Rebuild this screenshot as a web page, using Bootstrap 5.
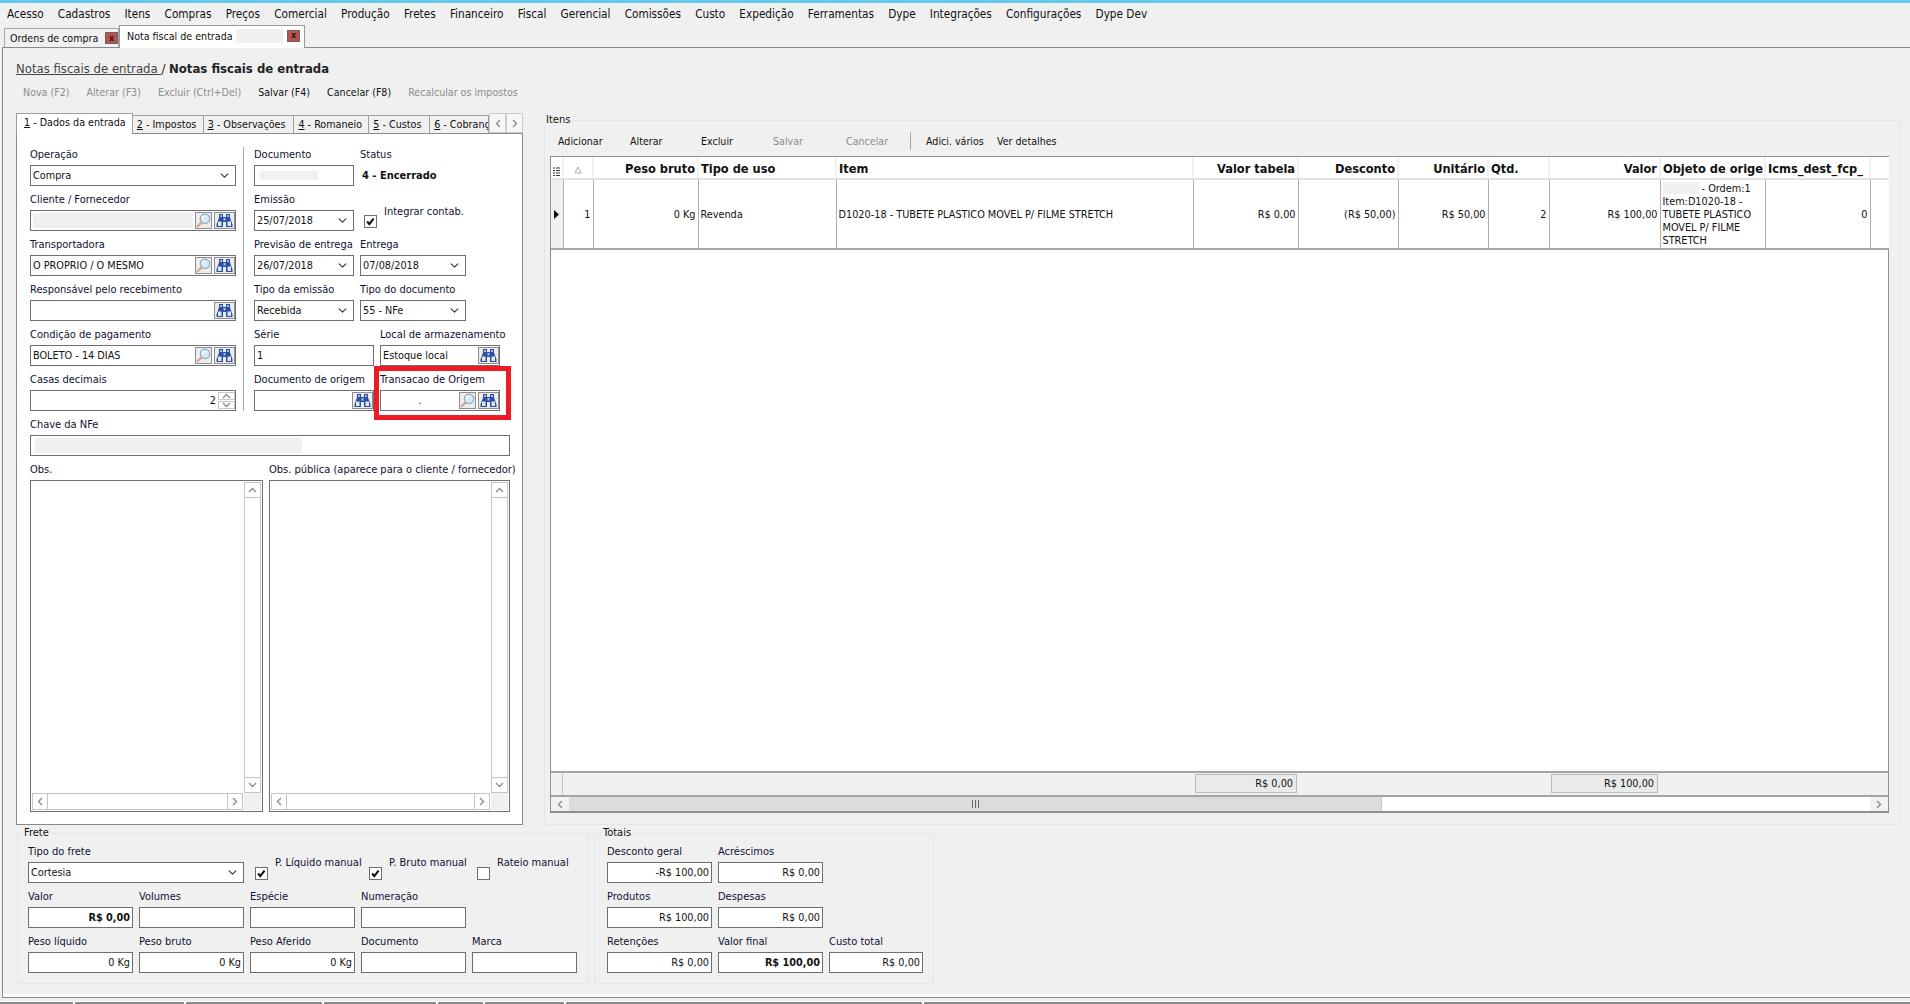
<!DOCTYPE html>
<html lang="pt-BR">
<head>
    <meta charset="UTF-8">
    <meta name="viewport" content="width=device-width, initial-scale=1.0">
    <title>Notas fiscais de entrada</title>
    <link href="https://cdn.jsdelivr.net/npm/bootstrap@5.3.0/dist/css/bootstrap.min.css" rel="stylesheet">
    <style>
        html, body { height: 100%; overflow: hidden; }
        body {
            background: #f0f0f0;
            color: #101030;
            font-family: "DejaVu Sans Condensed", "DejaVu Sans", sans-serif;
            font-stretch: condensed;
            font-size: 11px;
            line-height: 14px;
        }
        .top-strip { height: 3px; background: #64cbee; }
        .menu-bar { height: 22px; padding-left: 7px; gap: 14.2px; align-items: center; color: #111; white-space: nowrap; font-size: 11.7px; }

        /* document tabs */
        .doc-tabs { height: 22px; padding-left: 4px; border: 0; flex-wrap: nowrap; position: relative; z-index: 2; white-space: nowrap; font-size: 10.6px; }
        .doc-tab { display: flex; align-items: center; height: 19px; margin-top: 3px; border: 1px solid #a5a5a5; border-bottom: 0; background: #f0f0f0; padding-left: 5px; color: #111; }
        .doc-tab.on { background: #fff; height: 23px; margin-top: 0; padding: 0 0 3px 7px; border-color: #999; }
        .tab-x { display: flex; align-items: center; justify-content: center; width: 13px; height: 12px; background: #c0504d; border: 1px solid #666; font-size: 9px; line-height: 9px; font-weight: 700; color: #222; flex: none; }
        .blank-grey { background: #f0f0f0; }

        .work-frame { height: 951px; margin-left: 2px; border: 1px solid #8a8a8a; border-right: 0; background: #f0f0f0; padding-left: 13px; box-shadow: inset 0 -3px 0 #fff; }
        .crumb { height: 34px; padding-top: 13px; font-size: 13px; line-height: 16px; color: #222; }
        .crumb a { color: #444; }
        .tool-row { height: 31px; padding-top: 3px; gap: 17px; padding-left: 7px; color: #111; white-space: nowrap; font-size: 10.6px; }
        .off { color: #8c8c8c; }
        .itens-tools span { display: block; }
        .mid-row { height: 712px; }

        /* left tab panel */
        .left-side { width: 507px; flex: none; }
        .panel-tabs { height: 20px; border: 0; flex-wrap: nowrap; position: relative; z-index: 1; font-size: 10.7px; }
        .panel-tab { height: 18px; margin-top: 2px; border: 1px solid #a0a0a0; border-left: 0; border-bottom: 0; background: #f0f0f0; display: flex; align-items: center; padding-left: 4px; color: #111; white-space: nowrap; overflow: hidden; }
        .panel-tab.on { height: 21px; margin-top: 0; background: #fff; border-left: 1px solid #9a9a9a; padding: 0 0 2px 7px; }
        .tab-arrow { width: 17px; height: 20px; background: #f7f7f7; border: 1px solid #ccc; display: flex; align-items: center; justify-content: center; color: #666; }
        .tab-panel { height: 692px; background: #fff; border: 1px solid #8a8a8a; padding: 8px 0 0 13px; }
        .fld { height: 45px; }
        .fld label, .memo-cap { display: block; height: 23px; line-height: 25px; margin: 0; white-space: nowrap; }
        .w-100px { width: 100px; }
        .w-106px { width: 106px; }
        .w-120px { width: 120px; }
        .w-206px { width: 206px; }
        .gap-6 { gap: 6px; }
        .v-sep { width: 1px; height: 264px; margin: 5px 10px 0 7px; background: #a9a9a9; flex: none; }

        .form-control.win-in, .form-select.win-in {
            height: 21px;
            min-height: 21px;
            border: 1px solid #6e6e6e;
            border-radius: 0;
            padding: 0 2px;
            font-size: 10.8px;
            line-height: 19px;
            color: #111;
            background-color: #fff;
            box-shadow: none;
        }
        .form-select.win-in { background-position: right 5px center; background-size: 11px 9px; }
        .form-control.win-in.num { text-align: right; }
        .form-control.win-in.strong { font-weight: 700; }
        .look-box { height: 21px; border: 1px solid #6e6e6e; background: #fff; padding: 1px 0 1px 1px; align-items: center; gap: 2px; color: #111; overflow: hidden; font-size: 10.8px; }
        .look-text { flex: 1 1 auto; padding-left: 1px; white-space: nowrap; overflow: hidden; }
        .pick-btn { width: 17px; height: 17px; flex: none; padding: 0; border: 1px solid #8d8d8d; border-radius: 0; background: #ececec; display: flex; align-items: center; justify-content: center; }
        .pick-btn.wide { width: 21px; }
        .pick-btn svg { display: block; }
        .grey-fill { height: 15px; background: #f0f0f0; }
        .spin { width: 17px; flex: none; display: flex; flex-direction: column; gap: 1px; }
        .spin span { height: 8px; border: 1px solid #c8c8c8; display: flex; align-items: center; justify-content: center; }
        .status-text { font-weight: 700; padding: 3px 0 0 2px; line-height: 16px; color: #111; white-space: nowrap; }

        .win-check.form-check-input { width: 13px; height: 13px; margin: 0; border: 1px solid #6e6e6e; border-radius: 0; flex: none; box-shadow: none; }
        input.win-check.form-check-input:checked[type=checkbox] {
            background-color: #fff;
            border-color: #6e6e6e;
            --bs-form-check-bg-image: url("data:image/svg+xml,%3csvg xmlns='http://www.w3.org/2000/svg' viewBox='0 0 13 13'%3e%3cpath fill='none' stroke='%23111' stroke-width='2.4' d='M2.5 6.5l2.6 3 5-6.5'/%3e%3c/svg%3e");
        }
        .contab { padding-top: 24px; }
        .contab span { margin: -6px 0 0 7px; white-space: nowrap; }
        .contab input { margin-top: 4px !important; margin-left: 4px !important; }

        .red-box { position: absolute; left: -6px; top: -1px; width: 137px; height: 54px; border: 5px solid #ed1c24; pointer-events: none; }

        .memo { height: 332px; border: 1px solid #6e6e6e; padding: 1px; display: grid; background: #fff; }
        .memo-a { width: 233px; grid-template-columns: 1fr 17px; grid-template-rows: 1fr 17px; }
        .memo-b { width: 241px; grid-template-columns: 1fr 17px; grid-template-rows: 1fr 17px; }
        .sb-v { grid-column: 2; grid-row: 1; border: 1px solid #c4c4c4; display: flex; flex-direction: column; justify-content: space-between; }
        .sb-h { grid-column: 1; grid-row: 2; border: 1px solid #c4c4c4; display: flex; justify-content: space-between; margin-right: 1px; }
        .sb-corner { grid-column: 2; grid-row: 2; background: #f0f0f0; }
        .sb-btn { width: 15px; height: 15px; display: flex; align-items: center; justify-content: center; flex: none; }
        .sb-v .sb-btn:first-child { border-bottom: 1px solid #c4c4c4; }
        .sb-v .sb-btn:last-child { border-top: 1px solid #c4c4c4; }
        .sb-h .sb-btn:first-child { border-right: 1px solid #c4c4c4; }
        .sb-h .sb-btn:last-child { border-left: 1px solid #c4c4c4; }

        /* itens grid */
        .group-box { border: 1px solid #dfe6ec; border-radius: 3px; margin: 0; padding: 0; }
        .group-box legend { float: none; width: auto; font-size: 11px; line-height: 12px; margin: 0 0 0 -6px; padding: 0 2px; color: #111; }
        .itens-box { width: 1356px; height: 711px; margin: 1px 0 0 21px; flex: none; padding: 0 10px 0 5px; }
        .itens-tools { height: 30px; padding-top: 8px; padding-left: 8px; white-space: nowrap; color: #111; font-size: 10.6px; }
        .tool-sep { width: 1px; height: 18px; margin: -2px 15px 0 0; background: #aaa; }
        .grid-wrap { height: 657px; width: 1339px; border: 1px solid #8f8f8f; border-bottom: 0; background: #fff; display: flex; flex-direction: column; }
        .items-table { table-layout: fixed; width: 1338px; margin: 0; border-collapse: collapse; color: #111; }
        .items-table > thead > tr > th {
            height: 22px; padding: 0 2px 2px; font-size: 12.7px; line-height: 14px; font-weight: 700; color: #111; white-space: nowrap; overflow: hidden;
            background: #fff; border: 0; border-right: 2px solid #f0f0f0; border-bottom: 2px solid #e2e2e2; box-shadow: none;
        }
        .items-table > tbody > tr > td {
            height: 70px; padding: 0 2px; font-size: 10.8px; line-height: 13px; vertical-align: middle; color: #111; background: #fff; box-shadow: none;
            border: 0; border-right: 1px solid #b0b0b0; border-bottom: 2px solid #a8a8a8;
        }
        .items-table td.row-mark { background: #f0f0f0; padding: 0 0 0 3px; }
        .items-table .end-col { border-right: 0 !important; }
        .grid-fill { flex: 1 1 auto; }
        .sum-row { height: 24px; border-top: 2px solid #a4a4a4; background: #f0f0f0; position: relative; display: flex; flex: none; }
        .sum-lead { width: 12px; border-right: 1px solid #c6c6c6; }
        .sum-cell { height: 19px; margin-top: 1px; border: 1px solid #bcbcbc; background: #e8eaeb; text-align: right; padding: 2px 3px 0 0; font-size: 10.8px; line-height: 14px; color: #111; flex: none; }
        .h-scroll { height: 18px; display: flex; border-top: 2px solid #a4a4a4; border-bottom: 2px solid #8f8f8f; background: #fff; flex: none; }
        .h-scroll .end-btn { width: 18px; display: flex; align-items: center; justify-content: center; background: #f2f2f2; flex: none; }
        .h-scroll .thumb { width: 813px; background: #dcdcdc; display: flex; align-items: center; justify-content: center; border-right: 1px solid #c4c4c4; flex: none; }
        .grip { width: 7px; height: 8px; border-left: 1px solid #666; border-right: 1px solid #666; position: relative; }
        .grip::after { content: ""; position: absolute; left: 2px; top: 0; bottom: 0; width: 1px; background: #666; }

        /* bottom */
        .bottom-row { height: 158px; padding-top: 2px; }
        .frete-box { width: 572px; height: 157px; margin: 0 0 0 1px; flex: none; padding: 0 0 0 10px; }
        .totais-box { width: 340px; height: 157px; margin: 0 0 0 5px; flex: none; padding: 0 0 0 12px; }
        .w-105px { width: 105px; }
        .w-216px { width: 216px; }
        .chk-item { display: flex; align-items: flex-start; white-space: nowrap; }
        .chk-item input { margin-top: 28px !important; }
        .chk-item span { margin: 17px 0 0 7px; }
        .chk-first { width: 114px; margin-left: 11px; }
        .chk-second { width: 108px; }

        .task-strip { height: 6px; padding-top: 1px; display: flex; gap: 2px; background: linear-gradient(#f0f0f0 0, #f0f0f0 3px, #fff 3px); }
        .task-strip span { height: 2px; margin-top: 3px; background: #8a8a8a; }
    </style>
</head>
<body>
    <svg width="0" height="0" class="position-absolute">
        <symbol id="ico-lens" viewBox="0 0 16 16">
            <path d="M6 10l-4.2 4.2" stroke="#d4a68e" stroke-width="2.4" stroke-linecap="round"/>
            <circle cx="9.600" cy="6.200" r="5" fill="#d3eaf8" stroke="#93a8b2" stroke-width="1.300"/>
            <path d="M6.800 6.200a2.800 2.800 0 0 1 2.800-2.800" stroke="#fff" stroke-width="1.200" fill="none"/>
        </symbol>
        <symbol id="ico-bino" viewBox="0 0 17 15">
            <path d="M3 1h4v3h3V1h4v3.500l2.500 7V14h-6.500V9H7v5H.5v-2.500L3 4.500z" fill="#2d4d9e"/>
            <rect x="4" y="2" width="2" height="2" fill="#a4c0ea"/>
            <rect x="11" y="2" width="2" height="2" fill="#a4c0ea"/>
            <rect x="2" y="8.500" width="3.500" height="4.500" fill="#dbe8f8"/>
            <rect x="11.500" y="8.500" width="3.500" height="4.500" fill="#dbe8f8"/>
            <rect x="7.500" y="5" width="2" height="2.500" fill="#a8c2e8"/>
        </symbol>
        <symbol id="chev-up" viewBox="0 0 9 6"><path d="M1 5l3.500-3.500L8 5" fill="none" stroke="#8a8a8a" stroke-width="1.300"/></symbol>
        <symbol id="chev-down" viewBox="0 0 9 6"><path d="M1 1l3.500 3.500L8 1" fill="none" stroke="#8a8a8a" stroke-width="1.300"/></symbol>
        <symbol id="chev-left" viewBox="0 0 6 9"><path d="M5 1L1.500 4.500 5 8" fill="none" stroke="#8a8a8a" stroke-width="1.300"/></symbol>
        <symbol id="chev-right" viewBox="0 0 6 9"><path d="M1 1l3.500 3.500L1 8" fill="none" stroke="#8a8a8a" stroke-width="1.300"/></symbol>
    </svg>

    <div class="top-strip"></div>
    <nav class="menu-bar d-flex">
        <span>Acesso</span><span>Cadastros</span><span>Itens</span><span>Compras</span><span>Preços</span><span>Comercial</span><span>Produção</span><span>Fretes</span><span>Financeiro</span><span>Fiscal</span><span>Gerencial</span><span>Comissões</span><span>Custo</span><span>Expedição</span><span>Ferramentas</span><span>Dype</span><span>Integrações</span><span>Configurações</span><span>Dype Dev</span>
    </nav>

    <ul class="nav doc-tabs">
        <li class="doc-tab" style="width:115px">Ordens de compra<span class="tab-x ms-auto">x</span></li>
        <li class="doc-tab on" style="width:186px">Nota fiscal de entrada<span class="blank-grey ms-auto" style="width:47px;height:14px"></span><span class="tab-x ms-1 me-1">x</span></li>
    </ul>

    <main class="work-frame">
        <div class="crumb"><a href="#">Notas fiscais de entrada </a> / <b>Notas fiscais de entrada</b></div>
        <div class="tool-row d-flex">
            <span class="off">Nova (F2)</span><span class="off">Alterar (F3)</span><span class="off">Excluir (Ctrl+Del)</span><span>Salvar (F4)</span><span>Cancelar (F8)</span><span class="off">Recalcular os impostos</span>
        </div>

        <div class="mid-row d-flex">
            <section class="left-side">
                <ul class="nav panel-tabs">
                    <li class="panel-tab on" style="width:117px"><span><u>1</u> - Dados da entrada</span></li>
                    <li class="panel-tab" style="width:71px"><span><u>2</u> - Impostos</span></li>
                    <li class="panel-tab" style="width:91px"><span><u>3</u> - Observações</span></li>
                    <li class="panel-tab" style="width:75px"><span><u>4</u> - Romaneio</span></li>
                    <li class="panel-tab" style="width:61px"><span><u>5</u> - Custos</span></li>
                    <li class="panel-tab" style="width:59px"><span><u>6</u> - Cobrança</span></li>
                    <li class="tab-arrow"><svg width="6" height="9"><use href="#chev-left"/></svg></li>
                    <li class="tab-arrow ms-auto"><svg width="6" height="9"><use href="#chev-right"/></svg></li>
                </ul>
                <div class="tab-panel">
                    <div class="d-flex">
                        <div class="w-206px">
                            <div class="fld"><label>Operação</label>
                                <select class="form-select win-in"><option>Compra</option></select></div>
                            <div class="fld"><label>Cliente / Fornecedor</label>
                                <div class="look-box d-flex"><div class="look-text"><div class="grey-fill"></div></div>
                                    <button class="btn pick-btn"><svg width="15" height="15"><use href="#ico-lens"/></svg></button>
                                    <button class="btn pick-btn wide"><svg width="17" height="15"><use href="#ico-bino"/></svg></button></div></div>
                            <div class="fld"><label>Transportadora</label>
                                <div class="look-box d-flex"><div class="look-text">O PROPRIO / O MESMO</div>
                                    <button class="btn pick-btn"><svg width="15" height="15"><use href="#ico-lens"/></svg></button>
                                    <button class="btn pick-btn wide"><svg width="17" height="15"><use href="#ico-bino"/></svg></button></div></div>
                            <div class="fld"><label>Responsável pelo recebimento</label>
                                <div class="look-box d-flex"><div class="look-text"></div>
                                    <button class="btn pick-btn wide"><svg width="17" height="15"><use href="#ico-bino"/></svg></button></div></div>
                            <div class="fld"><label>Condição de pagamento</label>
                                <div class="look-box d-flex"><div class="look-text">BOLETO - 14 DIAS</div>
                                    <button class="btn pick-btn"><svg width="15" height="15"><use href="#ico-lens"/></svg></button>
                                    <button class="btn pick-btn wide"><svg width="17" height="15"><use href="#ico-bino"/></svg></button></div></div>
                            <div class="fld"><label>Casas decimais</label>
                                <div class="look-box d-flex"><div class="look-text text-end">2</div>
                                    <div class="spin"><span><svg width="9" height="6"><use href="#chev-up"/></svg></span><span><svg width="9" height="6"><use href="#chev-down"/></svg></span></div></div></div>
                        </div>
                        <div class="v-sep"></div>
                        <div>
                            <div class="d-flex gap-6">
                                <div class="fld w-100px"><label>Documento</label>
                                    <div class="look-box d-flex"><div class="blank-grey ms-1" style="width:58px;height:9px"></div></div></div>
                                <div class="fld"><label>Status</label><div class="status-text">4 - Encerrado</div></div>
                            </div>
                            <div class="d-flex gap-6">
                                <div class="fld w-100px"><label>Emissão</label>
                                    <select class="form-select win-in"><option>25/07/2018</option></select></div>
                                <div class="d-flex contab"><input class="form-check-input win-check" type="checkbox" checked><span>Integrar contab.</span></div>
                            </div>
                            <div class="d-flex gap-6">
                                <div class="fld w-100px"><label>Previsão de entrega</label>
                                    <select class="form-select win-in"><option>26/07/2018</option></select></div>
                                <div class="fld w-106px"><label>Entrega</label>
                                    <select class="form-select win-in"><option>07/08/2018</option></select></div>
                            </div>
                            <div class="d-flex gap-6">
                                <div class="fld w-100px"><label>Tipo da emissão</label>
                                    <select class="form-select win-in"><option>Recebida</option></select></div>
                                <div class="fld w-106px"><label>Tipo do documento</label>
                                    <select class="form-select win-in"><option>55 - NFe</option></select></div>
                            </div>
                            <div class="d-flex gap-6">
                                <div class="fld w-120px"><label>Série</label>
                                    <input class="form-control win-in" value="1"></div>
                                <div class="fld w-120px"><label>Local de armazenamento</label>
                                    <div class="look-box d-flex"><div class="look-text">Estoque local</div>
                                        <button class="btn pick-btn wide"><svg width="17" height="15"><use href="#ico-bino"/></svg></button></div></div>
                            </div>
                            <div class="d-flex gap-6">
                                <div class="fld w-120px"><label>Documento de origem</label>
                                    <div class="look-box d-flex"><div class="look-text"></div>
                                        <button class="btn pick-btn wide"><svg width="17" height="15"><use href="#ico-bino"/></svg></button></div></div>
                                <div class="fld w-120px position-relative"><label>Transacao de Origem</label>
                                    <div class="look-box d-flex"><div class="look-text text-center">.</div>
                                        <button class="btn pick-btn"><svg width="15" height="15"><use href="#ico-lens"/></svg></button>
                                        <button class="btn pick-btn wide"><svg width="17" height="15"><use href="#ico-bino"/></svg></button></div>
                                    <div class="red-box"></div></div>
                            </div>
                        </div>
                    </div>
                    <div class="fld" style="width:480px"><label>Chave da NFe</label>
                        <div class="look-box d-flex px-1"><div class="grey-fill" style="width:267px"></div></div></div>
                    <div class="d-flex gap-6">
                        <div><div class="memo-cap">Obs.</div>
                            <div class="memo memo-a">
                                <div class="sb-v"><div class="sb-btn"><svg width="9" height="6"><use href="#chev-up"/></svg></div><div class="sb-btn"><svg width="9" height="6"><use href="#chev-down"/></svg></div></div>
                                <div class="sb-h"><div class="sb-btn"><svg width="6" height="9"><use href="#chev-left"/></svg></div><div class="sb-btn"><svg width="6" height="9"><use href="#chev-right"/></svg></div></div>
                                <div class="sb-corner"></div>
                            </div></div>
                        <div><div class="memo-cap">Obs. pública (aparece para o cliente / fornecedor)</div>
                            <div class="memo memo-b">
                                <div class="sb-v"><div class="sb-btn"><svg width="9" height="6"><use href="#chev-up"/></svg></div><div class="sb-btn"><svg width="9" height="6"><use href="#chev-down"/></svg></div></div>
                                <div class="sb-h"><div class="sb-btn"><svg width="6" height="9"><use href="#chev-left"/></svg></div><div class="sb-btn"><svg width="6" height="9"><use href="#chev-right"/></svg></div></div>
                                <div class="sb-corner"></div>
                            </div></div>
                    </div>
                </div>
            </section>

            <fieldset class="group-box itens-box">
                <legend>Itens</legend>
                <div class="itens-tools d-flex">
                    <span style="width:72px">Adicionar</span><span style="width:71px">Alterar</span><span style="width:72px">Excluir</span><span class="off" style="width:73px">Salvar</span><span class="off" style="width:64px">Cancelar</span>
                    <span class="tool-sep"></span>
                    <span style="width:71px">Adici. vários</span><span>Ver detalhes</span>
                </div>
                <div class="grid-wrap">
                    <table class="table items-table">
                        <colgroup>
                            <col style="width:12px"><col style="width:30px"><col style="width:105px"><col style="width:138px"><col style="width:357px"><col style="width:105px"><col style="width:100px"><col style="width:90px"><col style="width:61px"><col style="width:111px"><col style="width:105px"><col style="width:105px"><col>
                        </colgroup>
                        <thead>
                            <tr>
                                <th class="text-center p-0"><svg width="7" height="9"><path d="M0 1h2M3 1h4M0 3.500h2M3 3.500h4M0 6h2M3 6h4M0 8.500h2M3 8.500h4" stroke="#333"/></svg></th>
                                <th class="text-center"><svg width="8" height="8"><path d="M4 1L7 7H1z" fill="none" stroke="#aaa"/></svg></th>
                                <th class="text-end">Peso bruto</th><th>Tipo de uso</th><th>Item</th>
                                <th class="text-end">Valor tabela</th><th class="text-end">Desconto</th><th class="text-end">Unitário</th><th>Qtd.</th>
                                <th class="text-end">Valor</th><th>Objeto de orige</th><th>Icms_dest_fcp_</th><th class="end-col"></th>
                            </tr>
                        </thead>
                        <tbody>
                            <tr>
                                <td class="row-mark"><svg width="6" height="9"><path d="M0 0l5 4.500L0 9z" fill="#111"/></svg></td>
                                <td class="text-end">1</td><td class="text-end">0 Kg</td><td>Revenda</td>
                                <td>D1020-18 - TUBETE PLASTICO MOVEL P/ FILME STRETCH</td>
                                <td class="text-end">R$ 0,00</td><td class="text-end">(R$ 50,00)</td><td class="text-end">R$ 50,00</td><td class="text-end">2</td><td class="text-end">R$ 100,00</td>
                                <td><span class="blank-grey d-inline-block align-top" style="width:36px;height:12px"></span> - Ordem:1<br>Item:D1020-18 -<br>TUBETE PLASTICO<br>MOVEL P/ FILME<br>STRETCH</td>
                                <td class="text-end">0</td><td class="end-col"></td>
                            </tr>
                        </tbody>
                    </table>
                    <div class="grid-fill"></div>
                    <div class="sum-row">
                        <div class="sum-lead"></div>
                        <div style="width:632px"></div>
                        <div class="sum-cell" style="width:102px">R$ 0,00</div>
                        <div style="width:254px"></div>
                        <div class="sum-cell" style="width:107px">R$ 100,00</div>
                    </div>
                    <div class="h-scroll">
                        <div class="end-btn"><svg width="6" height="9"><use href="#chev-left"/></svg></div>
                        <div class="thumb"><div class="grip"></div></div>
                        <div class="flex-grow-1"></div>
                        <div class="end-btn"><svg width="6" height="9"><use href="#chev-right"/></svg></div>
                    </div>
                </div>
            </fieldset>
        </div>

        <div class="bottom-row d-flex">
            <fieldset class="group-box frete-box">
                <legend>Frete</legend>
                <div class="d-flex">
                    <div class="fld w-216px"><label>Tipo do frete</label>
                        <select class="form-select win-in"><option>Cortesia</option></select></div>
                    <div class="chk-item chk-first"><input class="form-check-input win-check" type="checkbox" checked><span>P. Líquido manual</span></div>
                    <div class="chk-item chk-second"><input class="form-check-input win-check" type="checkbox" checked><span>P. Bruto manual</span></div>
                    <div class="chk-item"><input class="form-check-input win-check" type="checkbox"><span>Rateio manual</span></div>
                </div>
                <div class="d-flex gap-6">
                    <div class="fld w-105px"><label>Valor</label><input class="form-control win-in num strong" value="R$ 0,00"></div>
                    <div class="fld w-105px"><label>Volumes</label><input class="form-control win-in"></div>
                    <div class="fld w-105px"><label>Espécie</label><input class="form-control win-in"></div>
                    <div class="fld w-105px"><label>Numeração</label><input class="form-control win-in"></div>
                </div>
                <div class="d-flex gap-6">
                    <div class="fld w-105px"><label>Peso líquido</label><input class="form-control win-in num" value="0 Kg"></div>
                    <div class="fld w-105px"><label>Peso bruto</label><input class="form-control win-in num" value="0 Kg"></div>
                    <div class="fld w-105px"><label>Peso Aferido</label><input class="form-control win-in num" value="0 Kg"></div>
                    <div class="fld w-105px"><label>Documento</label><input class="form-control win-in"></div>
                    <div class="fld w-105px"><label>Marca</label><input class="form-control win-in"></div>
                </div>
            </fieldset>
            <fieldset class="group-box totais-box">
                <legend>Totais</legend>
                <div class="d-flex gap-6">
                    <div class="fld w-105px"><label>Desconto geral</label><input class="form-control win-in num" value="-R$ 100,00"></div>
                    <div class="fld w-105px"><label>Acréscimos</label><input class="form-control win-in num" value="R$ 0,00"></div>
                </div>
                <div class="d-flex gap-6">
                    <div class="fld w-105px"><label>Produtos</label><input class="form-control win-in num" value="R$ 100,00"></div>
                    <div class="fld w-105px"><label>Despesas</label><input class="form-control win-in num" value="R$ 0,00"></div>
                </div>
                <div class="d-flex gap-6">
                    <div class="fld w-105px"><label>Retenções</label><input class="form-control win-in num" value="R$ 0,00"></div>
                    <div class="fld w-105px"><label>Valor final</label><input class="form-control win-in num strong" value="R$ 100,00"></div>
                    <div class="fld" style="width:94px"><label>Custo total</label><input class="form-control win-in num" value="R$ 0,00"></div>
                </div>
            </fieldset>
        </div>
    </main>
    <div class="task-strip">
        <span style="width:73px"></span><span style="width:109px"></span><span style="width:136px"></span><span style="width:112px"></span><span style="width:45px"></span><span style="width:79px"></span><span style="width:356px"></span><span class="flex-grow-1"></span>
    </div>

    <script src="https://cdn.jsdelivr.net/npm/bootstrap@5.3.0/dist/js/bootstrap.bundle.min.js"></script>
</body>
</html>
